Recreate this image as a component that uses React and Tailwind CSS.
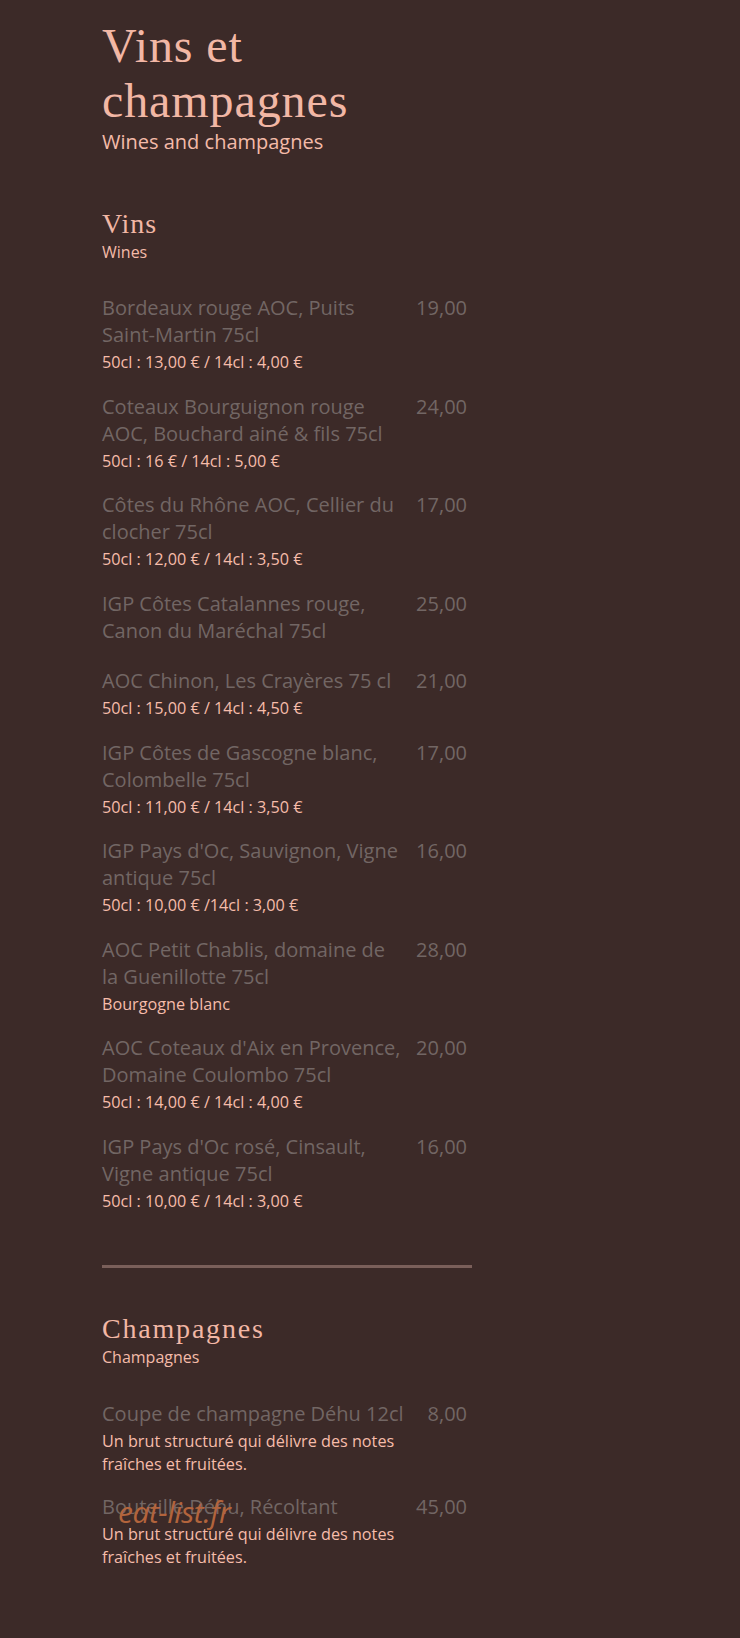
import React from "react";

const wines = [
  { name: ["Bordeaux rouge AOC, Puits", "Saint-Martin 75cl"], price: "19,00", sub: "50cl : 13,00 € / 14cl : 4,00 €" },
  { name: ["Coteaux Bourguignon rouge", "AOC, Bouchard ainé & fils 75cl"], price: "24,00", sub: "50cl : 16 € / 14cl : 5,00 €" },
  { name: ["Côtes du Rhône AOC, Cellier du", "clocher 75cl"], price: "17,00", sub: "50cl : 12,00 € / 14cl : 3,50 €" },
  { name: ["IGP Côtes Catalannes rouge,", "Canon du Maréchal 75cl"], price: "25,00", sub: null },
  { name: ["AOC Chinon, Les Crayères 75 cl"], price: "21,00", sub: "50cl : 15,00 € / 14cl : 4,50 €" },
  { name: ["IGP Côtes de Gascogne blanc,", "Colombelle 75cl"], price: "17,00", sub: "50cl : 11,00 € / 14cl : 3,50 €" },
  { name: ["IGP Pays d'Oc, Sauvignon, Vigne", "antique 75cl"], price: "16,00", sub: "50cl : 10,00 € /14cl : 3,00 €" },
  { name: ["AOC Petit Chablis, domaine de", "la Guenillotte 75cl"], price: "28,00", sub: "Bourgogne blanc" },
  { name: ["AOC Coteaux d'Aix en Provence,", "Domaine Coulombo 75cl"], price: "20,00", sub: "50cl : 14,00 € / 14cl : 4,00 €" },
  { name: ["IGP Pays d'Oc rosé, Cinsault,", "Vigne antique 75cl"], price: "16,00", sub: "50cl : 10,00 € / 14cl : 3,00 €" },
];

const champagnes = [
  { name: ["Coupe de champagne Déhu 12cl"], price: "8,00", desc: ["Un brut structuré qui délivre des notes", "fraîches et fruitées."] },
  { name: ["Bouteille Déhu, Récoltant"], price: "45,00", desc: ["Un brut structuré qui délivre des notes", "fraîches et fruitées."], mark: true },
];

const sans = "font-['Open_Sans',_'Liberation_Sans',_sans-serif]";
const serif = "font-['Liberation_Serif',_'DejaVu_Serif',_serif]";

function Lines({ lines }) {
  return lines.map((l, i) => (
    <React.Fragment key={i}>
      {l}
      {i < lines.length - 1 && <br />}
    </React.Fragment>
  ));
}

function Item({ name, price, sub, mark }) {
  return (
    <div className="relative flex">
      <div className="flex-1 min-w-0">
        <div className="text-[20px] leading-[27px] text-[#726664]">
          <Lines lines={name} />
        </div>
        {sub ? (
          <div className="mt-[3px] text-[16.2px] leading-[23px] text-[#f6bcaa]">
            <Lines lines={Array.isArray(sub) ? sub : [sub]} />
          </div>
        ) : (
          <div className="h-[5px]" />
        )}
      </div>
      <div className="w-[64px] shrink-0 pr-[5px] text-right text-[20px] leading-[27px] text-[#726664]">
        {price}
      </div>
      {mark && (
        <div className="absolute left-[16px] top-[4px] text-[30px] leading-none italic text-[#b3643c] tracking-[-0.5px]">
          eat-list.fr
        </div>
      )}
    </div>
  );
}

export default function App() {
  return (
    <div className={`min-h-[1638px] bg-[#3c2a28] pl-[102px] pt-[18px] ${sans}`}>
      <div className="w-[370px]">
        <h1 className={`${serif} text-[48px] leading-[55px] tracking-[0.9px] text-[#f2b7a5] font-normal`}>
          Vins et
          <br />
          champagnes
        </h1>
        <p className="text-[20px] leading-[28px] text-[#f4bba9]">Wines and champagnes</p>

        <section className="mt-[52px]">
          <h2 className={`${serif} text-[28px] leading-[32px] tracking-[1px] text-[#f2b7a5] font-normal`}>Vins</h2>
          <p className="text-[16px] leading-[24px] text-[#f4bba9]">Wines</p>
          <div className="mt-[30px] flex flex-col gap-[18.5px]">
            {wines.map((w, i) => (
              <Item key={i} {...w} />
            ))}
          </div>
        </section>

        <div className="mt-[52px] h-[3px] bg-[#7a5f5a]" />

        <section className="mt-[45px]">
          <h2 className={`${serif} text-[28px] leading-[32px] tracking-[1.8px] text-[#f2b7a5] font-normal`}>Champagnes</h2>
          <p className="text-[16px] leading-[24px] text-[#f4bba9]">Champagnes</p>
          <div className="mt-[31px] flex flex-col gap-[17px]">
            {champagnes.map((c, i) => (
              <Item key={i} name={c.name} price={c.price} sub={c.desc} mark={c.mark} />
            ))}
          </div>
        </section>
      </div>
    </div>
  );
}
